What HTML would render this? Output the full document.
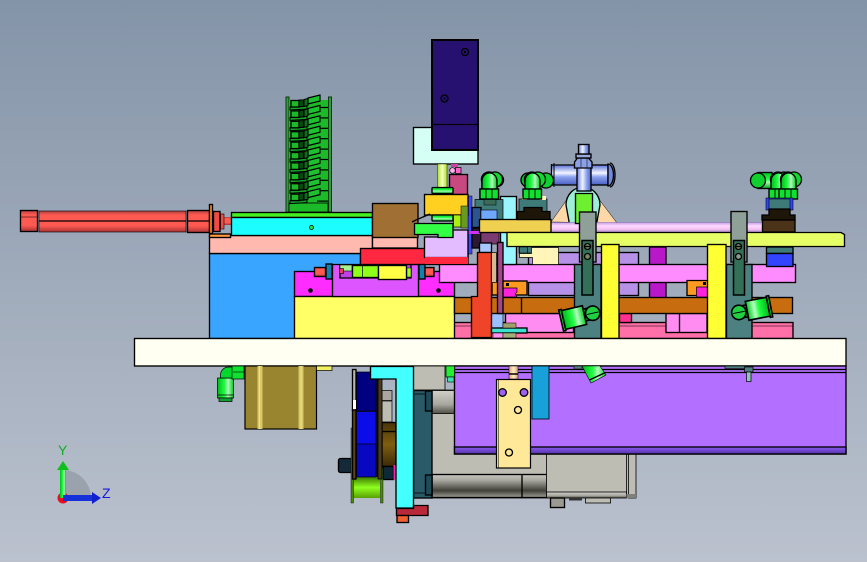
<!DOCTYPE html>
<html><head><meta charset="utf-8"><title>CAD assembly</title>
<style>
html,body{margin:0;padding:0;width:867px;height:562px;overflow:hidden;background:#a0abba}
svg{display:block}
[stroke="#000"]:not([stroke-width]){stroke-width:1.35}
text{font-family:"Liberation Sans",sans-serif}
</style></head><body>
<svg xmlns="http://www.w3.org/2000/svg" width="867" height="562" viewBox="0 0 867 562">
<defs>
<linearGradient id="bg" x1="0" y1="0" x2="0" y2="1"><stop offset="0" stop-color="#8494a8"/><stop offset="1" stop-color="#bbc2ce"/></linearGradient>
<linearGradient id="rd" x1="0" y1="0" x2="0" y2="1"><stop offset="0" stop-color="#b04040"/><stop offset=".2" stop-color="#ff5a52"/><stop offset=".7" stop-color="#ff5a52"/><stop offset="1" stop-color="#a83434"/></linearGradient>
<linearGradient id="gh" x1="0" y1="0" x2="1" y2="0"><stop offset="0" stop-color="#00b81c"/><stop offset=".45" stop-color="#22ff44"/><stop offset=".65" stop-color="#b8ffc0"/><stop offset="1" stop-color="#00c820"/></linearGradient>
<linearGradient id="gv" x1="0" y1="0" x2="0" y2="1"><stop offset="0" stop-color="#00c020"/><stop offset=".4" stop-color="#20ff40"/><stop offset=".6" stop-color="#a0ffb0"/><stop offset="1" stop-color="#00a818"/></linearGradient>
<linearGradient id="bl" x1="0" y1="0" x2="1" y2="0"><stop offset="0" stop-color="#6a80e0"/><stop offset=".4" stop-color="#f0f4ff"/><stop offset=".7" stop-color="#8aa0f0"/><stop offset="1" stop-color="#5068c8"/></linearGradient>
<linearGradient id="blv" x1="0" y1="0" x2="0" y2="1"><stop offset="0" stop-color="#5a70d8"/><stop offset=".4" stop-color="#f4f6ff"/><stop offset=".6" stop-color="#8aa0f0"/><stop offset="1" stop-color="#4a5fc0"/></linearGradient>
<linearGradient id="rod" x1="0" y1="0" x2="0" y2="1"><stop offset="0" stop-color="#c8a0e8"/><stop offset=".35" stop-color="#ffd8ff"/><stop offset=".7" stop-color="#f0c0f0"/><stop offset="1" stop-color="#a080c0"/></linearGradient>
<linearGradient id="shaft" x1="0" y1="0" x2="1" y2="0"><stop offset="0" stop-color="#a8e030"/><stop offset=".5" stop-color="#f8ffc0"/><stop offset="1" stop-color="#a8e030"/></linearGradient>
<linearGradient id="cyl" x1="0" y1="0" x2="0" y2="1"><stop offset="0" stop-color="#c8c8c0"/><stop offset=".25" stop-color="#a8a8a0"/><stop offset=".7" stop-color="#404038"/><stop offset="1" stop-color="#a0a098"/></linearGradient>
<linearGradient id="cyl2" x1="0" y1="0" x2="0" y2="1"><stop offset="0" stop-color="#d0d0c8"/><stop offset=".6" stop-color="#a8a8a0"/><stop offset="1" stop-color="#505048"/></linearGradient>
<linearGradient id="lime" x1="0" y1="0" x2="0" y2="1"><stop offset="0" stop-color="#3c7a00"/><stop offset=".5" stop-color="#90ff20"/><stop offset="1" stop-color="#58a000"/></linearGradient>
<linearGradient id="brn" x1="0" y1="0" x2="0" y2="1"><stop offset="0" stop-color="#4a3408"/><stop offset=".5" stop-color="#7e5e10"/><stop offset="1" stop-color="#3c2a06"/></linearGradient>
<linearGradient id="pband" x1="0" y1="0" x2="0" y2="1"><stop offset="0" stop-color="#8a5cf0"/><stop offset="1" stop-color="#5530a8"/></linearGradient>
<linearGradient id="peach" x1="0" y1="0" x2="1" y2="0"><stop offset="0" stop-color="#e0a060"/><stop offset=".5" stop-color="#fff0d0"/><stop offset="1" stop-color="#e0a060"/></linearGradient>
<g id="clip">
<path d="M317 107.500h11" stroke="#000" stroke-width="1.200"/>
<path d="M290 107h9l8-1v3l-17 1z" fill="#18a028" stroke="#000" stroke-width="1"/>
<rect x="291" y="100.500" width="8" height="6.500" fill="#1cb928" stroke="#000" stroke-width="1.300"/>
<rect x="299" y="100" width="4.500" height="6.500" fill="#074a10" stroke="#000" stroke-width="1"/>
<path d="M304 99.500l4-1v7l-4 1z" fill="#0f6a1c" stroke="#000" stroke-width="1"/>
<path d="M308 98l12-3v6l-12 3z" fill="#1cc030" stroke="#000" stroke-width="1.200"/>
</g>
<g id="elbowL">
<circle cx="8" cy="7.500" r="7.500" fill="#00c020" stroke="#000"/>
<circle cx="14" cy="7.500" r="7.500" fill="#10d830" stroke="#000"/>
<path d="M1 17v-8a7.500 8 0 0 1 15 0v8z" fill="url(#gh)" stroke="#000"/>
<rect x="-1" y="17" width="18.500" height="10" fill="#10e030" stroke="#000"/>
<path d="M5 17v10M11 17v10" stroke="#000" stroke-width=".9"/>
</g>
<g id="fit">
<rect x="0" y="0" width="18" height="16" fill="url(#gh)" stroke="#000"/>
<rect x="-2" y="-1" width="2" height="18" fill="#10e030" stroke="#000"/>
<rect x="18" y="3" width="5" height="10" fill="#20a030" stroke="#000"/>
<ellipse cx="25" cy="8" rx="6" ry="6" fill="#20d040" stroke="#000"/>
<path d="M20 8h10" stroke="#000" stroke-width=".8"/>
</g>
</defs>

<rect width="867" height="562" fill="url(#bg)"/>

<!-- axis triad -->
<path d="M63 470A28 28 0 0 1 91 498H63z" fill="#9aa2ad"/>
<circle cx="63" cy="498" r="5.500" fill="#e81020"/>
<rect x="60" y="470" width="6" height="28" fill="url(#gh)"/>
<path d="M63 461l-6 9h12z" fill="#0ec01e"/>
<rect x="63" y="495" width="29" height="6" fill="#1430d8"/>
<path d="M101 498l-9-6v12z" fill="#1020d0"/>
<text x="58" y="455" font-size="14" fill="#10b020">Y</text>
<text x="102" y="498" font-size="14" fill="#1818d8">Z</text>

<!-- red cylinder -->
<rect x="39" y="211" width="147" height="21" fill="url(#rd)" stroke="#000" stroke-width=".6"/>
<path d="M39 221h147" stroke="#000"/>
<rect x="20.500" y="210.500" width="17" height="21" fill="url(#rd)" stroke="#000"/>
<path d="M20 217h18" stroke="#000" stroke-width=".5"/>
<rect x="187.500" y="210.500" width="22" height="22" fill="url(#rd)" stroke="#000"/>
<path d="M187 221h22" stroke="#000"/>
<rect x="224" y="217" width="8" height="8" fill="url(#rd)"/>
<rect x="220.500" y="214" width="3.500" height="15" fill="#ee4c44" stroke="#000" stroke-width=".6"/>
<rect x="213.500" y="211.500" width="6.500" height="20" fill="#f04a44" stroke="#000"/>
<rect x="209.500" y="204.500" width="3" height="29" fill="#ff8a24" stroke="#000"/>

<!-- green tower -->
<rect x="286" y="97" width="3" height="115" fill="#2f9c3c" stroke="#0b3b10" stroke-width="1"/>
<rect x="328.500" y="97" width="3" height="115" fill="#2f9c3c" stroke="#0b3b10" stroke-width="1"/>
<rect x="289" y="100" width="39" height="112" fill="#1cb928"/>
<rect x="289" y="203" width="39" height="9" fill="#1cb928" stroke="#000" stroke-width=".8"/>
<use href="#clip"/>
<use href="#clip" y="10.400"/>
<use href="#clip" y="20.800"/>
<use href="#clip" y="31.200"/>
<use href="#clip" y="41.600"/>
<use href="#clip" y="52"/>
<use href="#clip" y="62.400"/>
<use href="#clip" y="72.800"/>
<use href="#clip" y="83.200"/>
<use href="#clip" y="93.600"/>

<!-- back rod & triangles -->
<path d="M551 222L568 198H598L617 223z" fill="#ffd8a8" stroke="#000" stroke-width=".5"/>
<path d="M566 205a17 18 0 0 1 34 0l-4 22h-26z" fill="#9cf0d8" stroke="#000"/>

<!-- lower back bars -->
<rect x="454" y="322.500" width="339" height="16" fill="#ff6fa8" stroke="#000"/>
<path d="M454 326h339" stroke="#000" stroke-width=".6"/>
<rect x="505.500" y="313.500" width="68" height="19" fill="#ff8cf0" stroke="#000"/>
<rect x="619.500" y="313.500" width="12" height="9" fill="#ff3090" stroke="#000"/>
<rect x="666" y="313.500" width="41" height="19" fill="#ff8cf0" stroke="#000"/>
<path d="M679.500 313v19" stroke="#000"/>
<rect x="491" y="300" width="12" height="28" fill="#9cc0ff" stroke="#000" stroke-width=".6"/>

<!-- back block columns -->
<rect x="528.500" y="252.500" width="110" height="43" fill="#b790e8" stroke="#000"/>
<rect x="649.500" y="247" width="16.500" height="51" fill="#b818c8" stroke="#000"/>

<!-- main base bodies -->
<rect x="209.500" y="253.500" width="151" height="85" fill="#39a5ff" stroke="#000"/>
<rect x="209.500" y="235.500" width="163" height="18" fill="#ffb9af" stroke="#000"/>
<rect x="209.500" y="234" width="21" height="3.500" fill="#ff9a40" stroke="#000"/>
<rect x="231.500" y="212.500" width="141" height="5" fill="#44f020" stroke="#000"/>
<rect x="231.500" y="217.500" width="141" height="18" fill="#1cfdff" stroke="#000"/>
<circle cx="311.500" cy="227.500" r="2" fill="#30e040" stroke="#000" stroke-width=".8"/>
<rect x="372.500" y="237" width="45" height="11" fill="#ffb9af" stroke="#000"/>
<rect x="372.500" y="203.500" width="45.500" height="34" fill="#a06f33" stroke="#000"/>

<!-- mid stack -->
<rect x="294.500" y="271.500" width="160" height="25" fill="#ff2cff" stroke="#000"/>
<rect x="294.500" y="296.500" width="160" height="42" fill="#ffff66" stroke="#000"/>
<path d="M332.500 264.500v32h86v-32z" fill="#dd55ff" stroke="#000"/>
<circle cx="310.500" cy="290.500" r="2.300" fill="#000"/>
<circle cx="438.500" cy="290.500" r="2.300" fill="#000"/>
<path d="M340 265v13h71v-13" fill="#c040e8" stroke="#000"/>
<rect x="340" y="265" width="12" height="6" fill="#a8f090" stroke="#000" stroke-width=".6"/>
<rect x="352.500" y="265.500" width="26" height="12" fill="#8fff1a" stroke="#000"/>
<path d="M362.500 265v12" stroke="#000" stroke-width=".7"/>
<rect x="378.500" y="265.500" width="28" height="14" fill="#ffff44" stroke="#000"/>
<rect x="314.500" y="267.500" width="11" height="9" fill="url(#rd)" stroke="#000"/>
<rect x="326" y="264" width="6" height="15" fill="#1480b0" stroke="#000"/>
<rect x="339.500" y="268.500" width="4" height="5" fill="#e04050" stroke="#000" stroke-width=".6"/>
<rect x="419" y="264" width="6" height="15" fill="#1480b0" stroke="#000"/>
<rect x="425" y="267.500" width="9" height="9" fill="url(#rd)" stroke="#000"/>
<rect x="407" y="268" width="4" height="9" fill="#a0ff20" stroke="#000" stroke-width=".5"/>
<rect x="360.500" y="248.500" width="107.500" height="16" fill="#ff2840" stroke="#000"/>

<!-- pink bar and orange bar -->
<rect x="439.500" y="264.500" width="356" height="18" fill="#ff8cff" stroke="#000"/>
<rect x="454.500" y="297.500" width="338" height="16" fill="#c86c10" stroke="#000"/>
<path d="M521.500 297v16" stroke="#000"/>
<rect x="492" y="281" width="35" height="14" fill="#ff9a20" stroke="#000"/>
<path d="M503 288h14v4l-2 2 2 3h-14z" fill="#ff22dd" stroke="#000" stroke-width=".7"/>
<rect x="506" y="283" width="3" height="3" fill="#000"/>
<path d="M687 280.500h21v7h-10v8h-11z" fill="#ff9a20" stroke="#000"/>
<rect x="696.500" y="287" width="11" height="10" fill="#ff22dd" stroke="#000" stroke-width=".7"/>
<rect x="703" y="282" width="3" height="3" fill="#000"/>

<!-- vertical pieces left of center -->
<rect x="519" y="199" width="28" height="54" fill="#3d7a78" stroke="#000" stroke-width=".7"/>
<rect x="522" y="196" width="5" height="4" fill="#fff5b8"/><rect x="540" y="196" width="6" height="4" fill="#fff5b8"/>
<path d="M519.500 253.500h12v-6h27v17h-26v-7h-13z" fill="#fff5b8" stroke="#000" stroke-width=".7"/>
<rect x="500.500" y="196.500" width="16" height="68" fill="#99f5ff" stroke="#000"/>
<rect x="475" y="199.500" width="28" height="22" fill="#3d7a78" stroke="#000" stroke-width=".7"/>
<rect x="468" y="196" width="4" height="58" fill="#3a4cff" stroke="#000" stroke-width=".5"/>
<rect x="472" y="207.500" width="9" height="20" fill="#2c5590" stroke="#000"/>
<rect x="472" y="228" width="9" height="20" fill="#2a1830" stroke="#000"/>
<rect x="481" y="210" width="16" height="10" fill="#6fa8ff" stroke="#000" stroke-width=".6"/>
<rect x="481" y="232" width="18" height="12" fill="#793b70" stroke="#000" stroke-width=".7"/>
<rect x="484" y="199" width="12" height="6" fill="#3a6a58" stroke="#000" stroke-width=".5"/>
<rect x="479.500" y="243" width="12" height="9.500" fill="#a8c8ff" stroke="#000"/>
<path d="M477.500 252.500h14v85h-20v-41h6z" fill="#f04428" stroke="#000"/>
<rect x="491.500" y="252.500" width="5" height="30" fill="#d8b890" stroke="#000" stroke-width=".7"/>
<rect x="497.500" y="242.500" width="5.500" height="71" fill="#a04888" stroke="#000"/>
<rect x="491.500" y="328" width="35.500" height="5" fill="#40e0d0" stroke="#000"/>
<rect x="493" y="333" width="10" height="5" fill="#ff90ee" stroke="#000" stroke-width=".5"/>
<rect x="503" y="323" width="13" height="5" fill="#a0a068" stroke="#000" stroke-width=".5"/>
<rect x="503" y="333" width="13" height="5" fill="#a0b078" stroke="#000" stroke-width=".5"/>

<!-- top block & mint -->
<rect x="413.500" y="127.500" width="64.500" height="36.500" fill="#d5fff5" stroke="#000"/>
<rect x="432" y="40" width="46" height="110" fill="#271170" stroke="#000" stroke-width="2"/>
<path d="M432 124.500h46" stroke="#000"/>
<circle cx="444.500" cy="98.500" r="3.500" fill="none" stroke="#000"/><circle cx="444.500" cy="98.500" r="1.200" fill="#000"/>
<circle cx="465" cy="52" r="3.500" fill="none" stroke="#000"/><circle cx="465" cy="52" r="1.200" fill="#000"/>
<rect x="437.500" y="164" width="9.500" height="24" fill="url(#shaft)" stroke="#000" stroke-width=".4"/>
<rect x="449.500" y="174.500" width="18" height="20" fill="#c84880" stroke="#000"/>
<circle cx="452.500" cy="170.500" r="2.800" fill="#ffb0e8" stroke="#000" stroke-width=".7"/>
<rect x="455.500" y="167.500" width="5.500" height="6" fill="#ff66cc" stroke="#000" stroke-width=".7"/>
<rect x="451" y="164" width="7" height="3" fill="#d040a0"/>
<rect x="432" y="187.500" width="21" height="6" rx="1" fill="url(#gv)" stroke="#000"/>
<rect x="424.500" y="194.500" width="43.500" height="20.500" fill="#ffd020" stroke="#000"/>
<rect x="432" y="215" width="21" height="6" rx="1" fill="url(#gv)" stroke="#000"/>
<rect x="453.500" y="215" width="7.500" height="12" fill="#a8f010" stroke="#000" stroke-width=".7"/>
<rect x="461" y="206" width="7" height="22" fill="#6a9a20" stroke="#000" stroke-width=".5"/>
<rect x="468" y="231" width="12" height="3" fill="#cc30ff"/>
<path d="M424.500 237h15v-7h28.500v27.500h-43.500z" fill="#e3bbff" stroke="#000"/>
<path d="M414.500 223.500h38.500v14h-15v-3h-23.500z" fill="#33ff44" stroke="#000"/>
<path d="M412 222l4-2 14-6" stroke="#000" fill="none"/>
<rect x="425" y="257" width="43" height="7" fill="#ff2840"/>

<!-- long bars -->
<rect x="551" y="222.500" width="226" height="10" fill="url(#rod)" stroke="#8070b0" stroke-width=".5"/>
<path d="M575.500 193.500h17v30h-17z" fill="#6cf030" stroke="#000"/>
<rect x="479.500" y="219.500" width="71.500" height="13" fill="#f0d050" stroke="#000"/>
<path d="M507 232.500h334l3.500 2v12h-337.500z" fill="#e6ff66" stroke="#000"/>

<!-- blue fitting -->
<path d="M551.500 165h31v20h-31z" fill="url(#blv)" stroke="#000"/>
<path d="M551.500 164v22M554 163v24" stroke="#000" stroke-width="1"/>
<rect x="590" y="165" width="18" height="20" fill="url(#blv)" stroke="#000"/>
<path d="M608 164a5 10 0 0 1 0 22z" fill="#7088e0" stroke="#000"/>
<path d="M610 163a5 12 0 0 1 0 24" fill="none" stroke="#000"/>
<rect x="577" y="167" width="14" height="24" fill="url(#bl)" stroke="#000"/>
<path d="M574.500 162l3-4h11l3.500 4v6h-17.500z" fill="#8ca0e8" stroke="#000"/>
<path d="M581 158v10M587 158v10" stroke="#223" stroke-width=".7"/>
<rect x="576" y="154" width="15" height="4" fill="#9aa8d8" stroke="#000"/>
<rect x="578.500" y="144.500" width="10.500" height="9.500" fill="url(#bl)" stroke="#000"/>

<!-- green elbows -->
<use href="#elbowL" x="481" y="172"/>
<circle cx="497" cy="180" r="6.500" fill="#00c020" stroke="#000"/>
<use href="#elbowL" x="481" y="172"/>
<circle cx="528" cy="180" r="7" fill="#00c020" stroke="#000"/>
<rect x="538" y="173" width="8" height="15" fill="#00c828"/>
<circle cx="546" cy="180.500" r="7.500" fill="#10d030" stroke="#000"/>
<use href="#elbowL" x="524" y="172"/>
<rect x="758" y="172.500" width="14" height="16" fill="url(#gv)" stroke="#000"/>
<circle cx="758" cy="180.500" r="7.500" fill="#10d030" stroke="#000"/>
<circle cx="792" cy="180" r="7" fill="#00c020" stroke="#000"/>
<use href="#elbowL" x="770" y="172"/>
<use href="#elbowL" x="780" y="172"/>
<rect x="766" y="198" width="27" height="12" fill="#3344ff" stroke="#000" stroke-width=".6"/>
<rect x="769" y="199" width="21" height="11" fill="#3d7a78" stroke="#000" stroke-width=".6"/>
<path d="M524 207.500h18v4h8v8h-33v-8h7z" fill="#1e1608" stroke="#000"/>
<path d="M769 209h21v6h5v5h-33v-5h7z" fill="#1e1608" stroke="#000"/>
<rect x="762.500" y="220" width="32.500" height="12" fill="#4a3318" stroke="#000"/>
<rect x="766.500" y="247" width="26.500" height="6.500" fill="#3d7a78" stroke="#000"/>
<rect x="766.500" y="253.500" width="26.500" height="13" fill="#3344ff" stroke="#000"/>
<rect x="519.500" y="247" width="8" height="6" fill="#3d7a78" stroke="#000" stroke-width=".6"/>

<!-- teal columns -->
<rect x="574.500" y="264.500" width="26.500" height="74" fill="#4d8080" stroke="#000"/>
<rect x="726.500" y="264.500" width="25.500" height="74" fill="#4d8080" stroke="#000"/>
<rect x="601.500" y="244.500" width="17.500" height="94" fill="#ffff33" stroke="#000"/>
<rect x="707.500" y="244.500" width="18.500" height="94" fill="#ffff33" stroke="#000"/>
<!-- slots -->
<rect x="579.500" y="212" width="16.500" height="50" fill="#8fa099" stroke="#000"/>
<path d="M582 240.500h11v54.500h-11z" fill="#347058" stroke="#000" stroke-width="1.500"/>
<circle cx="587.500" cy="246.500" r="3" fill="#7a8a60" stroke="#000"/><path d="M585 246.500h5" stroke="#000"/>
<circle cx="587.500" cy="256.500" r="3" fill="#7a8a60" stroke="#000"/>
<rect x="731" y="211.500" width="16" height="50.500" fill="#8fa099" stroke="#000"/>
<path d="M733.500 240.500h11v54.500h-11z" fill="#347058" stroke="#000" stroke-width="1.500"/>
<circle cx="738.500" cy="246.500" r="3" fill="#7a8a60" stroke="#000"/><path d="M736 246.500h5" stroke="#000"/>
<circle cx="738.500" cy="256.500" r="3" fill="#8a9a90" stroke="#000"/>
<!-- tilted fittings -->
<use href="#fit" transform="translate(561.300 310.600) rotate(-13) scale(1.200)"/>
<use href="#fit" transform="translate(768.300 306.700) rotate(169) scale(1.200) translate(0 -8)"/>

<!-- base plate -->
<rect x="134.500" y="338.500" width="711.500" height="27.500" fill="#fffff2" stroke="#000"/>

<!-- gray motor -->
<rect x="413" y="366" width="32" height="24" fill="#bdbdb3" stroke="#000" stroke-width=".8"/>
<rect x="432" y="390" width="115" height="108" fill="#bdbdb3" stroke="#000" stroke-width=".7"/>
<rect x="432" y="390.500" width="30" height="23" fill="url(#cyl2)" stroke="#000" stroke-width=".8"/>
<rect x="432" y="474.500" width="115" height="23" fill="url(#cyl)" stroke="#000"/>
<path d="M522 474v24" stroke="#000"/>
<rect x="546.500" y="454" width="80" height="41" fill="#bdbdb3" stroke="#000" stroke-width=".8"/>
<rect x="546.500" y="492" width="80" height="6" fill="url(#cyl2)" stroke="#000" stroke-width=".8"/>
<rect x="628.500" y="454" width="7.500" height="44" fill="#bdbdb3" stroke="#000" stroke-width=".8"/>
<rect x="626.500" y="494" width="9.500" height="4" fill="#808078"/>
<rect x="550.500" y="498" width="14" height="9.500" fill="#9a9a92" stroke="#000"/>
<rect x="585.500" y="498" width="25" height="5" fill="#bdbdb3" stroke="#000" stroke-width=".8"/>
<rect x="569" y="498" width="13" height="2.500" fill="#333"/>
<rect x="413.500" y="390.500" width="18.500" height="107.500" fill="#2a5a68" stroke="#000"/>
<rect x="425.500" y="391" width="6.500" height="20" fill="#1f4a58" stroke="#000"/>
<rect x="425.500" y="475" width="6.500" height="20" fill="#1f4a58" stroke="#000"/>
<path d="M413 394h12M413 493h12" stroke="#000" stroke-width=".7"/>

<!-- purple box -->
<rect x="454.500" y="366" width="391.500" height="88" fill="#b36fff" stroke="#000"/>
<path d="M454 369.500h392M454 372.500h392" stroke="#000"/>
<rect x="454.500" y="447" width="391.500" height="7" fill="url(#pband)" stroke="#000"/>
<rect x="446" y="366" width="8.500" height="11" fill="#22ee33" stroke="#000" stroke-width=".7"/>
<rect x="447.500" y="377" width="6.500" height="5" fill="#40e0b0" stroke="#000" stroke-width=".6"/>
<rect x="532" y="366" width="17" height="53" fill="#18a0d8" stroke="#000" stroke-width=".8"/>
<path d="M582 366h18l6 9-15 8z" fill="url(#gh)" stroke="#000" stroke-width=".6"/>
<path d="M589.500 380l16-7.500" stroke="#000" stroke-width="1.500"/>
<rect x="574" y="366" width="8" height="3" fill="#5a8080" stroke="#000" stroke-width=".6"/>
<rect x="725" y="366" width="20" height="2.500" fill="#4d8080" stroke="#000" stroke-width=".6"/>
<rect x="744.500" y="367" width="8.500" height="5" fill="#4d8080" stroke="#000" stroke-width=".7"/>
<rect x="746.500" y="372" width="4.500" height="9.500" fill="#90c0c0" stroke="#000" stroke-width=".7"/>

<!-- cream plate -->
<rect x="509" y="366" width="9" height="13" fill="url(#peach)" stroke="#000" stroke-width=".5"/>
<path d="M509 374h9" stroke="#000" stroke-width="1.500"/>
<rect x="496.500" y="379.500" width="34" height="88.500" fill="#ffe998" stroke="#000" stroke-width="1.200"/>
<path d="M498.500 380v88" stroke="#000" stroke-width=".5"/>
<circle cx="502.500" cy="392.500" r="3.800" fill="#a060f0" stroke="#000"/>
<circle cx="524" cy="392.500" r="3.800" fill="#a060f0" stroke="#000"/>
<circle cx="518" cy="410" r="3.500" fill="none" stroke="#000"/>
<circle cx="509" cy="452.500" r="3.500" fill="none" stroke="#000"/>

<!-- olive block and fitting -->
<rect x="245" y="366" width="71.500" height="63" fill="#998530" stroke="#000" stroke-width="1.200"/>
<rect x="257.500" y="366" width="5" height="63" fill="#d8c868"/>
<rect x="298.500" y="366" width="5" height="63" fill="#d8c868"/>
<path d="M259.500 366v63M301 366v63" stroke="#f0e090" stroke-width="1"/>
<rect x="316.500" y="366" width="15.500" height="4.500" fill="#f0f060" stroke="#000" stroke-width=".7"/>
<rect x="217.500" y="378" width="16" height="20" fill="url(#gh)" stroke="#000" stroke-width=".7"/>
<path d="M220.500 378v-3a8 8 0 0 1 8-8h4v11z" fill="#00d830" stroke="#000" stroke-width=".7"/>
<rect x="232" y="366" width="12" height="13" fill="#10e030" stroke="#000" stroke-width=".7"/>
<path d="M233 372h11" stroke="#000" stroke-width=".6"/>
<path d="M218 395h15M218 398h15" stroke="#000" stroke-width=".8"/>
<rect x="219" y="398" width="13" height="3.500" fill="#10a030" stroke="#000" stroke-width=".7"/>

<!-- pulley -->
<rect x="338.500" y="458.500" width="14" height="14" rx="2" fill="#152a38" stroke="#000"/>
<rect x="382" y="390.500" width="10" height="10" fill="#aaa8a0" stroke="#000" stroke-width=".7"/>
<rect x="382" y="401" width="10" height="21" fill="#bdbdb3" stroke="#000" stroke-width=".7"/>
<rect x="382" y="422.500" width="14" height="44" fill="url(#brn)" stroke="#000"/>
<path d="M382 431.500h14" stroke="#000"/>
<rect x="383" y="466.500" width="10.500" height="13" fill="#0e2a38" stroke="#000"/>
<rect x="393.500" y="465" width="3" height="14.500" fill="#ff20b0"/>
<rect x="353" y="477" width="27" height="21" fill="url(#lime)"/>
<rect x="351" y="428" width="2.500" height="75" fill="#4a8a00" stroke="#000" stroke-width=".4"/>
<rect x="380.500" y="468" width="2.500" height="35" fill="#4a8a00" stroke="#000" stroke-width=".4"/>
<rect x="352.500" y="369.500" width="3.500" height="41" fill="#b8b8b0" stroke="#000"/>
<rect x="353" y="400" width="3" height="9" fill="#fff"/>
<rect x="352.500" y="410" width="3.500" height="69" fill="#5a4410" stroke="#000"/>
<rect x="356.500" y="372" width="19.500" height="39" fill="#000080" stroke="#000" stroke-width=".7"/>
<rect x="356.500" y="411.500" width="19.500" height="33" fill="#0c0ce8" stroke="#000" stroke-width=".7"/>
<rect x="356.500" y="444" width="19.500" height="33" fill="#0808c0" stroke="#000" stroke-width=".7"/>
<rect x="376" y="379" width="2" height="98" fill="#080820"/>
<rect x="378" y="379" width="4" height="100" fill="#4a3a20" stroke="#000" stroke-width=".8"/>

<!-- cyan L -->
<path d="M370.500 366.500h43v141.500h-17.500V379h-25.500z" fill="#44ffff" stroke="#000"/>
<path d="M396.500 508.500h17v-3h14.500v10h-31.500z" fill="#b82a3a" stroke="#000"/>
<rect x="397" y="515.500" width="11.500" height="7" fill="#f06030" stroke="#000"/>
</svg>
</body></html>
